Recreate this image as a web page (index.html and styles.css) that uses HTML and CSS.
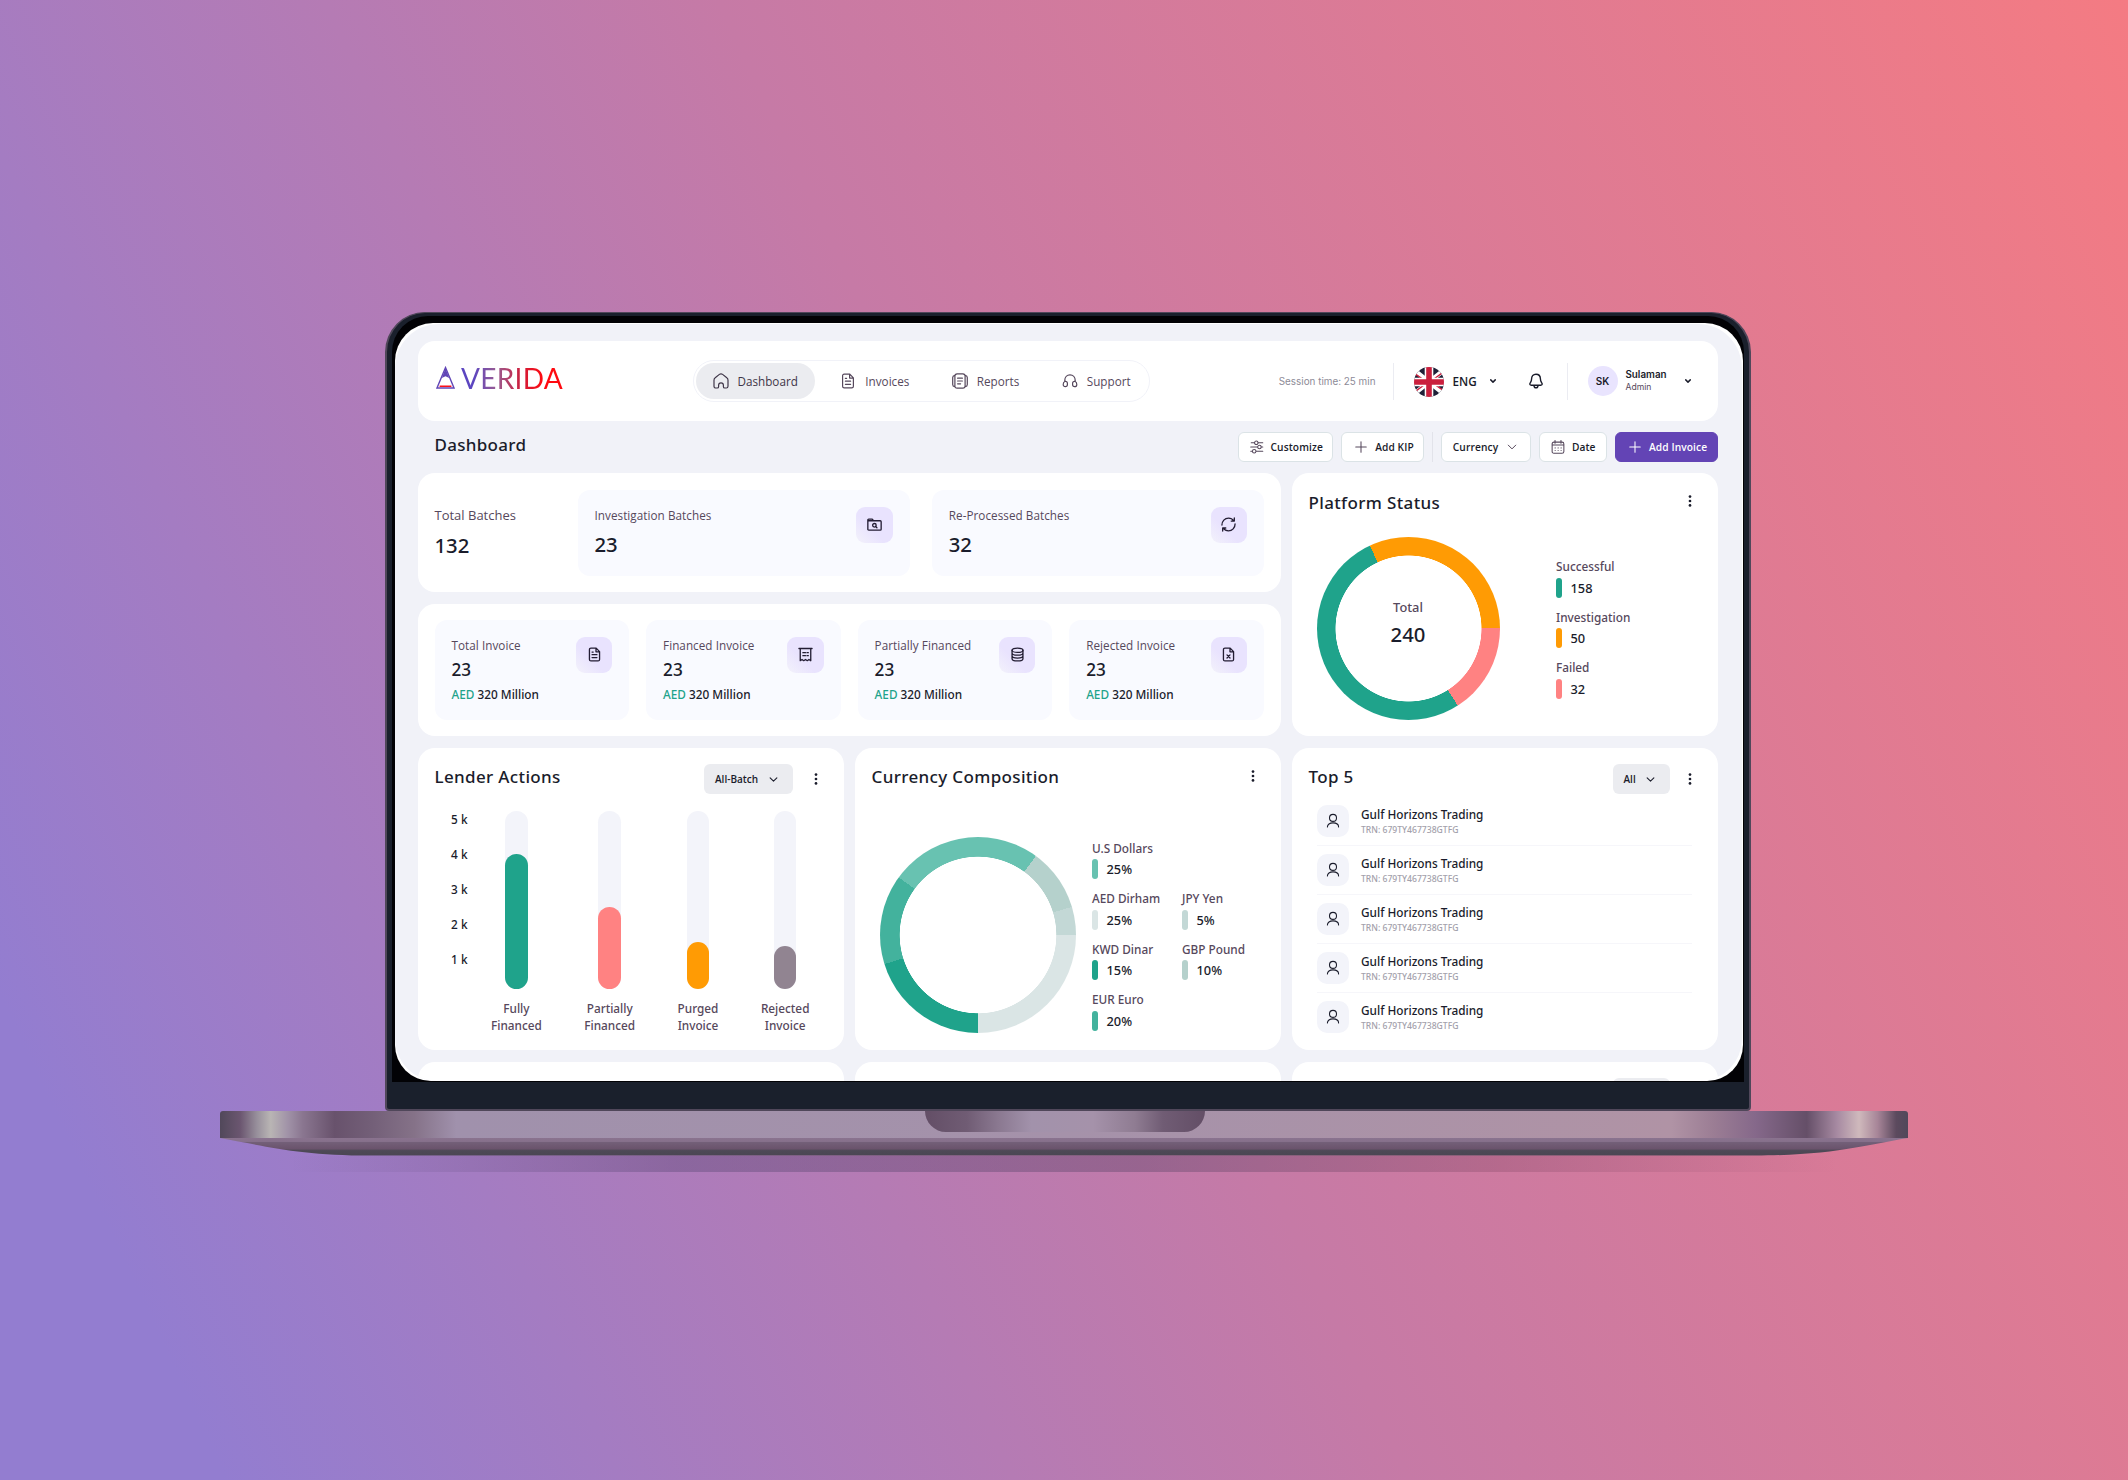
FILE: index.html
```html
<!DOCTYPE html>
<html lang="en">

<head>
    <meta charset="UTF-8">
    <meta name="viewport" content="width=device-width, initial-scale=1.0">
    <title>Verida - Dashboard</title>
    <link rel="stylesheet" href="styles.css">
</head>

<body>
    <svg class="sprite" width="0" height="0">
        <symbol id="i-home" viewBox="0 0 16 16"><path d="M1 7.2C1 6.2 1.4 5.4 2.2 4.8L6.4 1.4C7.4.6 8.6.6 9.6 1.4L13.8 4.8C14.6 5.4 15 6.2 15 7.2V13.2C15 14.3 14.2 15 13.2 15H11.8C10.9 15 10.4 14.5 10.4 13.7V12.2C10.4 10.8 9.5 9.8 8 9.8S5.6 10.8 5.6 12.2V13.7C5.6 14.5 5.1 15 4.2 15H2.8C1.8 15 1 14.3 1 13.2Z"/></symbol>
        <symbol id="i-doc" viewBox="0 0 16 16"><path d="M9.8 1.2H4.2C3.2 1.2 2.6 1.8 2.6 2.8V13.2C2.6 14.2 3.2 14.8 4.2 14.8H11.8C12.8 14.8 13.4 14.2 13.4 13.2V4.9ZM9.6 1.4V5.1H13.2M5.4 8.2H10.6M5.4 11.3H10.6M5.4 5.4H6.6"/></symbol>
        <symbol id="i-report" viewBox="0 0 16 16"><path d="M5.2.8H10.8C12.4.8 13.1 1.6 13.1 3V13C13.1 14.4 12.4 15.2 10.8 15.2H5.2C3.6 15.2 2.9 14.4 2.9 13V3C2.9 1.6 3.6.8 5.2.8ZM2.8 2.3C1.3 2.5.7 3.2.7 4.6V11.4C.7 12.8 1.3 13.5 2.8 13.7M13.2 2.3C14.7 2.5 15.3 3.2 15.3 4.6V11.4C15.3 12.8 14.7 13.5 13.2 13.7M5.6 5.2H10.4M5.6 8H10.4M5.6 10.8H8.6"/></symbol>
        <symbol id="i-support" viewBox="0 0 16 16"><path d="M2.8 8.6V7.2C2.8 4.2 5 1.9 8 1.9S13.2 4.2 13.2 7.2V8.6M2.9 8.5C4.3 8.1 5.4 8.8 5.4 10.2V11.6C5.4 13 4.6 13.7 3.4 13.7S1.2 12.8 1.2 11.4C1.2 9.9 1.6 8.9 2.9 8.5ZM13.1 8.5C11.7 8.1 10.6 8.8 10.6 10.2V11.6C10.6 13 11.4 13.7 12.6 13.7S14.8 12.8 14.8 11.4C14.8 9.9 14.4 8.9 13.1 8.5Z"/></symbol>
        <symbol id="i-bell" viewBox="0 0 16 16"><path d="M8 1.2C5.3 1.2 3.6 3.2 3.6 5.8C3.6 8.6 2.6 9.3 2 10.4C1.5 11.4 2.1 12.2 3.2 12.2H12.8C13.9 12.2 14.5 11.4 14 10.4C13.4 9.3 12.4 8.6 12.4 5.8C12.4 3.2 10.7 1.2 8 1.2ZM6 12.4C6 13.8 6.8 14.8 8 14.8S10 13.8 10 12.4"/></symbol>
        <symbol id="i-sliders" viewBox="0 0 16 16"><path d="M1.4 3.2H5M9.4 3.2H14.6M.8 8H8.6M12.8 8H14.6M.9 12.8H2.6M7.4 12.8H14.6"/><circle cx="7.2" cy="3.2" r="2"/><circle cx="10.8" cy="8" r="2"/><circle cx="4.8" cy="12.8" r="2"/></symbol>
        <symbol id="i-plus" viewBox="0 0 16 16"><path d="M8 2V14M2 8H14"/></symbol>
        <symbol id="i-chev" viewBox="0 0 16 16"><path d="M2 5L8 11L14 5"/></symbol>
        <symbol id="i-calendar" viewBox="0 0 16 16"><path d="M3.4 2.4H12.6C14 2.4 14.7 3.1 14.7 4.5V13C14.7 14.4 14 15.1 12.6 15.1H3.4C2 15.1 1.3 14.4 1.3 13V4.5C1.3 3.1 2 2.4 3.4 2.4ZM1.4 5.8H14.6M4.6.5V3.6M11.4.5V3.6"/><path stroke-dasharray=".1 3.3" d="M4.7 9H12M4.7 12.1H12"/></symbol>
        <symbol id="i-folder" viewBox="0 0 16 16"><path d="M.9 3.2C.9 2.6 1.2 2.2 1.8 2.2H5.6L7 4H14.1C14.7 4 15.1 4.4 15.1 5V13C15.1 13.6 14.7 14 14.1 14H1.9C1.3 14 .9 13.6 .9 13ZM.9 4H7M9.2 10.2L10.6 11.5"/><circle cx="7.9" cy="8.8" r="1.9"/></symbol>
        <symbol id="i-sync" viewBox="0 0 16 16"><path d="M1 8.6C1 4.4 4 1.2 8 1.2C10.4 1.2 12.4 2.4 13.6 4.1M14.2 1V4.3H10.9M15 7.4C15 11.6 12 14.8 8 14.8C5.6 14.8 3.6 13.6 2.4 11.9M1.8 15V11.7H5.1"/></symbol>
        <symbol id="i-bill" viewBox="0 0 16 16"><path d="M1 1.6H15M2.4 1.7V14.6L4.3 13.3L6.1 14.6L8 13.3L9.9 14.6L11.7 13.3L13.6 14.6V1.7M5.2 6H8M9.6 6H11M5.2 9.2H8M9.6 9.2H11"/></symbol>
        <symbol id="i-coins" viewBox="0 0 16 16"><ellipse cx="8" cy="3.4" rx="5.8" ry="2.3"/><path d="M2.2 3.4V12.4C2.2 13.8 4.8 14.8 8 14.8S13.8 13.8 13.8 12.4V3.4M2.2 6.4C2.2 7.8 4.8 8.7 8 8.7S13.8 7.8 13.8 6.4M2.2 9.4C2.2 10.8 4.8 11.8 8 11.8S13.8 10.8 13.8 9.4"/></symbol>
        <symbol id="i-docx" viewBox="0 0 16 16"><path d="M9.8 1.2H4.2C3.2 1.2 2.6 1.8 2.6 2.8V13.2C2.6 14.2 3.2 14.8 4.2 14.8H11.8C12.8 14.8 13.4 14.2 13.4 13.2V4.9ZM9.6 1.4V5.1H13.2M6.4 8.4L9.6 11.8M9.6 8.4L6.4 11.8"/></symbol>
        <symbol id="i-user" viewBox="0 0 16 16"><circle cx="8" cy="5" r="4"/><path d="M1.6 15.4C1.6 12.6 4.2 10.7 8 10.7S14.4 12.6 14.4 15.4"/></symbol>
        <symbol id="i-dots" viewBox="0 0 4 12"><circle cx="2" cy="1.6" r="1.35"/><circle cx="2" cy="6" r="1.35"/><circle cx="2" cy="10.4" r="1.35"/></symbol>
    </svg>

    <div class="laptop">
        <div class="lid">
            <div class="panel">
                <div class="screen">
                    <div class="page">
                        <header class="header">
                            <div class="logo">
                                <svg class="logo-mark" viewBox="0 0 19 23">
                                    <path d="M9.5 1.6L18 22H1Z" fill="none" stroke="#6146b6" stroke-width="1.4"/>
                                    <path d="M9.5 2.2L13.2 12L9.5 10.2L5.8 12Z" fill="#6146b6"/>
                                    <path d="M3.6 20.2H15.4" stroke="#fb1119" stroke-width="1.6"/>
                                </svg>
                                <span class="logo-text">VERIDA</span>
                            </div>
                            <nav class="nav">
                                <a class="nav-item active"><svg class="icon"><use href="#i-home"/></svg>Dashboard</a>
                                <a class="nav-item"><svg class="icon"><use href="#i-doc"/></svg>Invoices</a>
                                <a class="nav-item"><svg class="icon"><use href="#i-report"/></svg>Reports</a>
                                <a class="nav-item"><svg class="icon"><use href="#i-support"/></svg>Support</a>
                            </nav>
                            <div class="account">
                                <span class="session">Session time: 25 min</span>
                                <span class="line"></span>
                                <svg class="flag" viewBox="0 0 30 30">
                                    <clipPath id="round"><circle cx="15" cy="15" r="15"/></clipPath>
                                    <g clip-path="url(#round)">
                                        <rect width="30" height="30" fill="#1f2138"/>
                                        <path d="M0 3L30 27M30 3L0 27" stroke="#fff" stroke-width="4.6"/>
                                        <path d="M0 6L10 13M30 4.5L20 12M0 25.5L10 18M30 24L20 17" stroke="#ca1f3d" stroke-width="1.5"/>
                                        <path d="M15 0V30M0 15H30" stroke="#fff" stroke-width="8.6"/>
                                        <path d="M15 0V30M0 15H30" stroke="#ca1f3d" stroke-width="5.6"/>
                                    </g>
                                </svg>
                                <span class="lang">ENG</span>
                                <svg class="icon caret"><use href="#i-chev"/></svg>
                                <svg class="icon bell"><use href="#i-bell"/></svg>
                                <span class="line"></span>
                                <span class="avatar">SK</span>
                                <div class="user">
                                    <div class="user-name">Sulaman</div>
                                    <div class="user-role">Admin</div>
                                </div>
                                <svg class="icon caret"><use href="#i-chev"/></svg>
                            </div>
                        </header>

                        <div class="toolbar">
                            <h1 class="title">Dashboard</h1>
                            <div class="buttons">
                                <button class="btn btn-customize"><svg class="icon"><use href="#i-sliders"/></svg>Customize</button>
                                <button class="btn btn-kip"><svg class="icon"><use href="#i-plus"/></svg>Add KIP</button>
                                <span class="line"></span>
                                <button class="btn btn-currency">Currency<svg class="icon chev"><use href="#i-chev"/></svg></button>
                                <button class="btn btn-date"><svg class="icon"><use href="#i-calendar"/></svg>Date</button>
                                <button class="btn btn-primary"><svg class="icon"><use href="#i-plus"/></svg>Add Invoice</button>
                            </div>
                        </div>

                        <main class="grid">
                            <div class="overview">
                                <section class="card batches">
                                    <div class="total">
                                        <div class="total-label">Total Batches</div>
                                        <div class="number">132</div>
                                    </div>
                                    <div class="tile">
                                        <div>
                                            <div class="label">Investigation Batches</div>
                                            <div class="number">23</div>
                                        </div>
                                        <span class="badge"><svg class="icon"><use href="#i-folder"/></svg></span>
                                    </div>
                                    <div class="tile">
                                        <div>
                                            <div class="label">Re-Processed Batches</div>
                                            <div class="number">32</div>
                                        </div>
                                        <span class="badge"><svg class="icon"><use href="#i-sync"/></svg></span>
                                    </div>
                                </section>
                                <section class="card invoices">
                                    <div class="tile">
                                        <div>
                                            <div class="label">Total Invoice</div>
                                            <div class="count">23</div>
                                            <div class="amount"><span>AED</span> 320 Million</div>
                                        </div>
                                        <span class="badge"><svg class="icon"><use href="#i-doc"/></svg></span>
                                    </div>
                                    <div class="tile">
                                        <div>
                                            <div class="label">Financed Invoice</div>
                                            <div class="count">23</div>
                                            <div class="amount"><span>AED</span> 320 Million</div>
                                        </div>
                                        <span class="badge"><svg class="icon"><use href="#i-bill"/></svg></span>
                                    </div>
                                    <div class="tile">
                                        <div>
                                            <div class="label">Partially Financed</div>
                                            <div class="count">23</div>
                                            <div class="amount"><span>AED</span> 320 Million</div>
                                        </div>
                                        <span class="badge"><svg class="icon"><use href="#i-coins"/></svg></span>
                                    </div>
                                    <div class="tile">
                                        <div>
                                            <div class="label">Rejected Invoice</div>
                                            <div class="count">23</div>
                                            <div class="amount"><span>AED</span> 320 Million</div>
                                        </div>
                                        <span class="badge"><svg class="icon"><use href="#i-docx"/></svg></span>
                                    </div>
                                </section>
                            </div>

                            <section class="card status">
                                <div class="card-head">
                                    <h2>Platform Status</h2>
                                    <svg class="dots"><use href="#i-dots"/></svg>
                                </div>
                                <div class="status-body">
                                    <div class="donut donut-status">
                                        <div class="donut-label">Total</div>
                                        <div class="number">240</div>
                                    </div>
                                    <div class="legend">
                                        <div class="legend-item teal"><span>Successful</span><b>158</b></div>
                                        <div class="legend-item orange"><span>Investigation</span><b>50</b></div>
                                        <div class="legend-item pink"><span>Failed</span><b>32</b></div>
                                    </div>
                                </div>
                            </section>

                            <section class="card lender">
                                <div class="card-head">
                                    <h2>Lender Actions</h2>
                                    <button class="select">All-Batch<svg class="icon"><use href="#i-chev"/></svg></button>
                                    <svg class="dots"><use href="#i-dots"/></svg>
                                </div>
                                <div class="chart">
                                    <div class="axis">
                                        <span>5 k</span><span>4 k</span><span>3 k</span><span>2 k</span><span>1 k</span>
                                    </div>
                                    <div class="bars">
                                        <div class="bar teal"><div class="track"><i style="height: 134.5px"></i></div>Fully<br>Financed</div>
                                        <div class="bar pink"><div class="track"><i style="height: 82px"></i></div>Partially<br>Financed</div>
                                        <div class="bar orange"><div class="track"><i style="height: 46.5px"></i></div>Purged<br>Invoice</div>
                                        <div class="bar grey"><div class="track"><i style="height: 43px"></i></div>Rejected<br>Invoice</div>
                                    </div>
                                </div>
                            </section>

                            <section class="card currency">
                                <div class="card-head">
                                    <h2>Currency Composition</h2>
                                    <svg class="dots"><use href="#i-dots"/></svg>
                                </div>
                                <div class="currency-body">
                                    <div class="donut donut-currency"></div>
                                    <div class="legend">
                                        <div class="legend-item usd"><span>U.S Dollars</span><b>25%</b></div>
                                        <div class="legend-item aed"><span>AED Dirham</span><b>25%</b></div>
                                        <div class="legend-item teal"><span>KWD Dinar</span><b>15%</b></div>
                                        <div class="legend-item eur"><span>EUR Euro</span><b>20%</b></div>
                                    </div>
                                    <div class="legend legend-second">
                                        <div class="legend-item jpy"><span>JPY Yen</span><b>5%</b></div>
                                        <div class="legend-item gbp"><span>GBP Pound</span><b>10%</b></div>
                                    </div>
                                </div>
                            </section>

                            <section class="card top">
                                <div class="card-head">
                                    <h2>Top 5</h2>
                                    <button class="select">All<svg class="icon"><use href="#i-chev"/></svg></button>
                                    <svg class="dots"><use href="#i-dots"/></svg>
                                </div>
                                <ul class="list">
                                    <li><span class="person"><svg class="icon"><use href="#i-user"/></svg></span><div><div class="name">Gulf Horizons Trading</div><div class="trn">TRN: 679TY467738GTFG</div></div></li>
                                    <li><span class="person"><svg class="icon"><use href="#i-user"/></svg></span><div><div class="name">Gulf Horizons Trading</div><div class="trn">TRN: 679TY467738GTFG</div></div></li>
                                    <li><span class="person"><svg class="icon"><use href="#i-user"/></svg></span><div><div class="name">Gulf Horizons Trading</div><div class="trn">TRN: 679TY467738GTFG</div></div></li>
                                    <li><span class="person"><svg class="icon"><use href="#i-user"/></svg></span><div><div class="name">Gulf Horizons Trading</div><div class="trn">TRN: 679TY467738GTFG</div></div></li>
                                    <li><span class="person"><svg class="icon"><use href="#i-user"/></svg></span><div><div class="name">Gulf Horizons Trading</div><div class="trn">TRN: 679TY467738GTFG</div></div></li>
                                </ul>
                            </section>

                            <section class="card next"></section>
                            <section class="card next"></section>
                            <section class="card next"><div class="select-stub"></div></section>
                        </main>
                    </div>
                </div>
            </div>
        </div>
        <div class="base"><div class="notch"></div></div>
        <div class="base-bottom"></div>
        <div class="base-shadow"></div>
    </div>
</body>

</html>
```
FILE: styles.css
```css
* {
    box-sizing: border-box;
}

body {
    margin: 0;
    width: 2128px;
    height: 1480px;
    padding: 312px 220px 0;
    overflow: hidden;
    background: linear-gradient(65deg, #937dd0 8%, #c67aa6 50%, #f57b82 101%);
    font-family: "Noto Sans", "Open Sans", sans-serif;
    font-size: 12px;
    line-height: 16px;
    color: #1a1c2b;
}

h1, h2, ul {
    margin: 0;
    padding: 0;
    font-weight: 500;
}

button {
    font: inherit;
    color: inherit;
}

.sprite {
    position: absolute;
}

.icon {
    display: block;
    flex: none;
    width: 16px;
    height: 16px;
    fill: none;
    stroke: currentColor;
    stroke-width: 1.2;
    stroke-linecap: round;
    stroke-linejoin: round;
}

/* laptop */
.laptop {
    width: 1688px;
}

.lid {
    width: 1366px;
    height: 799px;
    margin-left: 164.5px;
    padding: 3px 5px 0;
    background: #1a202c;
    border: 2.5px solid #50475a;
    border-top-width: 1px;
    border-radius: 40px 40px 4px 4px;
}

.panel {
    height: 766px;
    padding: 7px 0 1px 3px;
    background: #020205;
    border-radius: 36px 36px 0 0;
}

.screen {
    width: 1348px;
    height: 758px;
    padding: 1px 1px 0 0;
    background: #fff;
    border-radius: 38px 38px 36px 36px;
    overflow: hidden;
}

.page {
    height: 757px;
    padding: 17px 24px 0 23.5px;
    background: #f1f2f8;
    border-radius: 44px 44px 42px 42px;
    overflow: hidden;
}

.base {
    height: 27px;
    border-radius: 3px 3px 0 0;
    background: linear-gradient(90deg, #51485a 0, #6b5670 1.2%, #98909c 2.2%, #b9b5b4 3%, #a193a8 4%, #8a7690 4.9%, #68526c 6.8%, #735f78 9%, #857288 11.5%, #a091ac 14%, #a592aa 50%, #b093a5 86%, #9b7d94 88.5%, #85688a 91%, #654f68 94%, #a78aa2 95.8%, #cfb9bc 97.1%, #a78598 98.2%, #5c4a5e 99.3%, #51485a);
}

.notch {
    width: 280px;
    height: 21px;
    margin-left: 705px;
    border-radius: 0 0 23px 23px;
    background: linear-gradient(90deg, #634e66 0, #705c74 15%, #8a7890 26%, #a292ab 38%, #a592aa 60%, #8f7c92 75%, #705c74 85%, #634e66);
}

.base-bottom {
    height: 17.5px;
    background: linear-gradient(#8a738f 0, #86708b 20%, #735f78 25%, #6a536c 60%, #4e4956 70%, #4a4653);
    clip-path: path("M0 0H1688C1650 6 1615 17.5 1535 17.5H150C80 17.5 45 8 0 0Z");
}

.base-shadow {
    height: 16.5px;
    margin: 0 70px;
    background: linear-gradient(90deg, rgba(80, 65, 110, 0), rgba(80, 65, 110, 0.36) 25%, rgba(85, 65, 100, 0.38) 55%, rgba(130, 70, 100, 0.32) 78%, rgba(150, 70, 100, 0));
}

/* header */
.header {
    display: flex;
    align-items: center;
    height: 80px;
    padding-right: 27px;
    background: #fff;
    border-radius: 17px;
}

.logo {
    display: flex;
    width: 274.5px;
    padding: 0 0 7px 17.5px;
}

.logo-mark {
    width: 19px;
    height: 23px;
    margin-top: 2px;
}

.logo-text {
    margin-left: 6.5px;
    font-family: Lato, sans-serif;
    font-size: 28px;
    line-height: 28px;
    letter-spacing: 0.3px;
    background: linear-gradient(90deg, #5b45c0 12%, #9a5c92 35%, #cc1f3e 58%, #ff0a10 80%);
    -webkit-background-clip: text;
    background-clip: text;
    color: transparent;
}

.nav {
    display: flex;
    width: 457px;
    gap: 8.5px;
    padding: 2px;
    border: 1px solid #f1f2f8;
    border-radius: 21px;
}

.nav-item {
    display: flex;
    align-items: center;
    gap: 9px;
    height: 36px;
    padding: 0 17px;
    border-radius: 18px;
    font-family: "Open Sans", sans-serif;
    font-size: 11.7px;
    color: #56485c;
}

.nav-item.active {
    background: #ebecf0;
    color: #3f3648;
}

.account {
    display: flex;
    align-items: center;
    margin-left: auto;
    font-family: Inter, sans-serif;
}

.session {
    font-size: 9.9px;
    color: #8d8b97;
}

.line {
    width: 1px;
    height: 37px;
    background: #ebecf2;
}

.session + .line {
    margin: 0 20px 0 17px;
}

.flag {
    width: 30px;
    height: 30px;
    margin-top: 1px;
}

.lang {
    width: 37px;
    margin-left: 9px;
    font-family: "Open Sans", sans-serif;
    font-size: 11.7px;
    font-weight: 600;
}

.caret {
    width: 6px;
    height: 6px;
    stroke-width: 3.8;
}

.bell {
    margin: 0 23px 0 32px;
    stroke-width: 1.4;
}

.avatar {
    width: 30px;
    height: 30px;
    margin: 0 8px 0 20px;
    border-radius: 50%;
    background: #e9e4fe;
    font-size: 10px;
    font-weight: 600;
    line-height: 30px;
    text-align: center;
}

.user {
    width: 59px;
    line-height: 13px;
}

.user-name {
    font-size: 9.8px;
    font-weight: 600;
}

.user-role {
    font-size: 8.6px;
    color: #56485c;
}

/* toolbar */
.toolbar {
    display: flex;
    justify-content: space-between;
    height: 52px;
    padding: 11px 0 0 16.5px;
}

.title {
    font-size: 17px;
    line-height: 26px;
    letter-spacing: 0.3px;
}

.buttons {
    display: flex;
    gap: 8.1px;
}

.buttons .line {
    height: 30px;
    background: #e2e3ea;
}

.btn {
    display: flex;
    align-items: center;
    height: 30px;
    padding: 0 0 0 11px;
    border: 1px solid #dbe3e6;
    border-radius: 6px;
    background: #fff;
    font-family: "Open Sans", sans-serif;
    font-size: 10.2px;
    font-weight: 600;
    letter-spacing: 0.1px;
}

.btn .icon {
    width: 14px;
    height: 14px;
    margin-right: 7px;
    color: #56485c;
}

.btn-customize {
    width: 95.5px;
}

.btn-kip {
    width: 82.5px;
}

.btn-kip .icon {
    margin-left: 1px;
}

.btn-currency {
    width: 90px;
}

.btn-currency .chev {
    width: 10px;
    height: 10px;
    margin: 0 0 0 9px;
    stroke-width: 1.6;
}

.btn-date {
    width: 68px;
}

.btn-primary {
    width: 102.5px;
    padding-left: 12px;
    border-color: #6344b5;
    background: #6344b5;
    color: #fff;
}

.btn-primary .icon {
    color: #fff;
}

/* cards */
.grid {
    display: grid;
    grid-template-columns: repeat(3, 425.5px);
    grid-template-rows: 263px 302.5px 60px;
    gap: 11.5px;
}

.card {
    background: #fff;
    border-radius: 17px;
}

.overview {
    grid-column: span 2;
    display: flex;
    flex-direction: column;
    gap: 11.5px;
}

.batches {
    display: flex;
    gap: 22px;
    height: 119px;
    padding: 17px 16.5px 0;
}

.total {
    width: 121px;
    padding-top: 15.5px;
    line-height: 18px;
}

.total-label {
    font-family: "Open Sans", sans-serif;
    font-size: 13px;
    color: #56485c;
}

.tile {
    flex: 1;
    display: flex;
    justify-content: space-between;
    padding: 16.5px 17px 0;
    border-radius: 12px;
    background: #f9faff;
}

.batches .tile {
    height: 86px;
}

.label {
    color: #56485c;
    font-family: "Open Sans", sans-serif;
    font-size: 11.7px;
    letter-spacing: 0.05px;
}

.number {
    margin-top: 7px;
    font-size: 20.3px;
    font-weight: 500;
    line-height: 28px;
}

.badge {
    display: flex;
    align-items: center;
    justify-content: center;
    width: 36.5px;
    height: 36.5px;
    border-radius: 9px;
    background: linear-gradient(45deg, #f3f2fb, #e9e3fe 40%);
    color: #231d33;
}

.badge .icon {
    width: 15px;
    height: 15px;
    stroke-width: 1.4;
}

.invoices {
    display: flex;
    gap: 16.7px;
    height: 132.5px;
    padding: 16.5px 16.5px 0;
}

.invoices .tile {
    height: 100px;
}

.count {
    margin-top: 5px;
    font-size: 17.2px;
    font-weight: 500;
    line-height: 24px;
}

.amount {
    margin-top: 4px;
    font-size: 11.8px;
    font-weight: 500;
}

.amount span {
    color: #1fa38b;
}

.card-head {
    display: flex;
    align-items: flex-start;
    height: 55px;
    padding: 16.5px 26px 0 16.5px;
}

.card-head h2 {
    flex: 1;
    font-size: 17px;
    line-height: 25px;
    letter-spacing: 0.35px;
}

.dots {
    width: 4px;
    height: 12px;
    margin-top: 5.5px;
    fill: #1a1c2b;
}

.select {
    display: flex;
    align-items: center;
    justify-content: space-between;
    width: 57px;
    height: 30px;
    padding: 0 15px 0 11px;
    border: 0;
    border-radius: 6px;
    background: #ebecf0;
    font-family: "Open Sans", sans-serif;
    font-size: 10px;
    font-weight: 600;
}

.lender .select {
    width: 89px;
}

.select .icon {
    width: 9px;
    height: 9px;
    stroke-width: 1.9;
}

.select + .dots {
    margin: 9px 0 0 18px;
}

.lender .select + .dots {
    margin-left: 20.5px;
}

/* charts */
.donut {
    border-radius: 50%;
    text-align: center;
}

.donut-status {
    width: 183px;
    height: 183px;
    margin-left: 24.5px;
    padding-top: 61px;
    background:
        radial-gradient(circle, #fff 72.7px, transparent 73.3px),
        conic-gradient(from -25deg, #ff9b04 115deg, #ff8282 0 172.4deg, #1fa38b 0);
}

.donut-label {
    font-size: 12.8px;
    line-height: 18px;
    color: #56485c;
    font-weight: 500;
}

.donut .number {
    margin-top: 4.5px;
}

.status-body {
    display: flex;
    padding-top: 8.5px;
}

.legend {
    display: flex;
    flex-direction: column;
    gap: 9.5px;
    color: #56485c;
    font-weight: 500;
    font-size: 11.8px;
}

.status .legend {
    margin: 21.5px 0 0 56.5px;
}

.legend-item {
    height: 41px;
}

.legend-item span {
    display: block;
}

.legend-item b {
    display: flex;
    align-items: center;
    gap: 9px;
    height: 20px;
    margin-top: 3.5px;
    font-size: 12.8px;
    font-weight: 500;
    color: #1a1c2b;
}

.legend-item b::before {
    content: "";
    width: 5.5px;
    height: 20px;
    border-radius: 3px;
    background: var(--color);
}

.teal { --color: #1fa38b; }
.orange { --color: #ff9b04; }
.pink { --color: #ff8282; }
.grey { --color: #918491; }
.usd { --color: #68c2b1; }
.aed { --color: #dae5e5; }
.eur { --color: #43b29d; }
.jpy { --color: #c3d8d6; }
.gbp { --color: #b5d1cc; }

.chart {
    display: flex;
    padding: 8px 34px 0 33px;
}

.axis {
    display: flex;
    flex-direction: column;
    gap: 19.1px;
    width: 40px;
    font-size: 11.8px;
    font-weight: 500;
    letter-spacing: 0.1px;
}

.bars {
    display: flex;
    justify-content: space-between;
    flex: 1;
    color: #56485c;
    font-size: 11.8px;
    font-weight: 500;
    line-height: 16.8px;
    text-align: center;
}

.track {
    display: flex;
    align-items: flex-end;
    width: 22.5px;
    height: 178px;
    margin: 0 auto 11.5px;
    border-radius: 12px;
    background: #f3f4fa;
}

.track i {
    width: 100%;
    border-radius: 12px;
    background: var(--color);
}

.currency-body {
    display: flex;
    padding: 34px 0 0 25px;
}

.donut-currency {
    width: 196px;
    height: 196px;
    background:
        radial-gradient(circle, #fff 78px, transparent 78.6px),
        conic-gradient(#68c2b1 36.2deg, #b5d1cc 0 73.3deg, #c3d8d6 0 90deg, #dae5e5 0 180deg, #1fa38b 0 252.7deg, #43b29d 0 306deg, #68c2b1 0);
}

.currency .legend {
    width: 74px;
    margin: 3px 0 0 16px;
    white-space: nowrap;
}

.currency .legend-second {
    margin-top: 53.5px;
}

/* top 5 */
.list {
    padding: 2px 26px 0 25px;
    list-style: none;
}

.list li {
    display: flex;
    gap: 12px;
    height: 49px;
}

.list li + li {
    border-top: 1px solid #f6f6fa;
    padding-top: 7.5px;
    margin-top: -8.5px;
    height: 57.5px;
}

.person {
    display: flex;
    align-items: center;
    justify-content: center;
    width: 32px;
    height: 32px;
    border-radius: 10px;
    background: #f3f4fa;
}

.person .icon {
    width: 14px;
    height: 15px;
}

.name {
    font-weight: 500;
    font-size: 11.8px;
    margin-top: 1.5px;
}

.trn {
    margin-top: 1.5px;
    font-size: 8.6px;
    line-height: 12px;
    color: #a3a1ab;
}

.select-stub {
    width: 57px;
    height: 30px;
    margin: 16.5px 0 0 321px;
    border-radius: 6px;
    background: #ebecf0;
}
```
